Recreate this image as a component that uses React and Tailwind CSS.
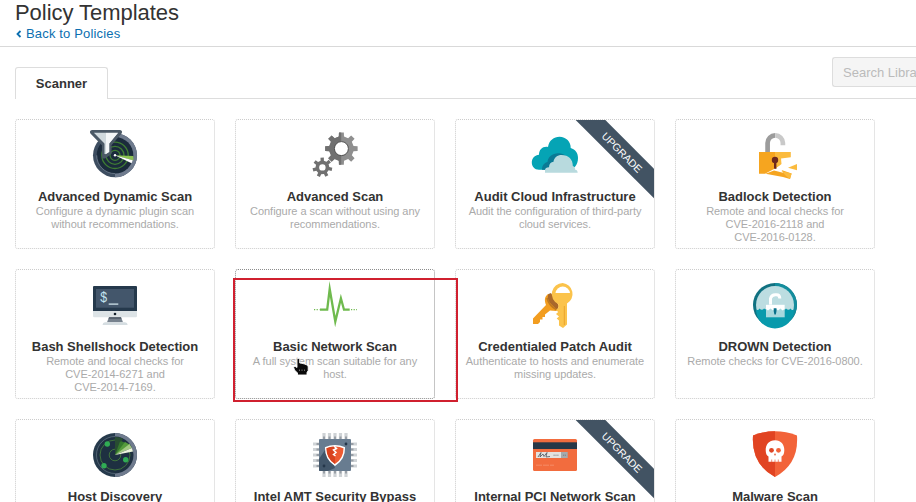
import React from "react";

function Icon({ children }) {
  return (
    <svg viewBox="0 0 50 50" className="h-[50px] w-[50px] shrink-0 overflow-visible">
      {children}
    </svg>
  );
}

function FunnelRadar() {
  return (
    <Icon>
      <circle cx="25" cy="25.3" r="22" fill="#3d4d60" />
      <path d="M25 3.3a22 22 0 0 1 0 44z" fill="#6f7b8e" />
      <circle cx="25" cy="25.3" r="18.3" fill="#1b2b3c" />
      <path d="M25 43.6A18.3 18.3 0 0 1 6.7 25.3" fill="none" stroke="#8a96a6" strokeWidth=".6" />
      <g fill="none" stroke="#3f7d33" strokeWidth="1.3">
        <circle cx="25" cy="25.3" r="13.2" />
        <circle cx="25" cy="25.3" r="9" />
        <circle cx="25" cy="25.3" r="5" />
      </g>
      <path d="M25 25.3L43.3 26v4.5z" fill="#8cc152" />
      <path d="M25 25.3L42.8 30.3l-1.2 3z" fill="#fff" />
      <path d="M2.500 1.500h27q1.500 0 .7 1.200L20 14.500v8.400l-5.500 4h-1V14.500L1.800 2.700Q1 1.500 2.500 1.500z" fill="#dfe5e8" stroke="#4b5966" strokeWidth="3.200" strokeLinejoin="round" />
      <path d="M16 2.800h12L19.300 13.500V22l-3.300 2z" fill="#f4f7f8" />
      <path d="M4 2.800h12V24h-1.500V13.500z" fill="#d0d9dd" />
      <circle cx="25" cy="25.3" r="1.200" fill="#fff" />
    </Icon>
  );
}

function gearPath(cx, cy, outer, root, teeth, turn) {
  const pts = [];
  const step = (Math.PI * 2) / teeth;
  for (let i = 0; i < teeth; i++) {
    const a = i * step + turn;
    [
      [root, -0.27],
      [outer, -0.19],
      [outer, 0.19],
      [root, 0.27],
    ].forEach(([r, f]) => {
      pts.push(`${(cx + r * Math.cos(a + f * step)).toFixed(2)} ${(cy + r * Math.sin(a + f * step)).toFixed(2)}`);
    });
  }
  return `M${pts.join("L")}Z`;
}

function Gears() {
  const big = gearPath(31.4, 18.6, 16.4, 12.4, 8, 0);
  return (
    <Icon>
      <clipPath id="gear-left"><rect x="0" y="0" width="31.2" height="50" /></clipPath>
      <path d={big} fill="#8f8f8f" />
      <path d={big} fill="#707070" clipPath="url(#gear-left)" />
      <circle cx="31.4" cy="18.6" r="7" fill="#fff" stroke="#4f4f4f" strokeWidth="1" />
      <path d={gearPath(12.4, 37.4, 9.9, 6.9, 7, 0.2)} fill="#707070" />
      <circle cx="12.4" cy="37.4" r="3.2" fill="#fff" />
    </Icon>
  );
}

function Cloud() {
  return (
    <Icon>
      <path d="M9 39.7C4.500 39.700 1.800 36.500 1.800 32.500C1.800 28 5 25 9 24.700C9 19.500 13 16 18 17C19 10.500 24 6.800 29.500 6.800C36 6.800 41 12 40.700 18C45.500 19.500 48 23 48 28C48 35 44 39.700 38 39.700Z" fill="#05a4b5" />
      <path d="M12 39.700C12 35 15 32.500 17.500 32C18 26 24 22 31 23.500C35 24.500 38 27 39 31L30 39.700Z" fill="#0a7a95" />
      <path d="M15 42.800V40C15 38.500 16.500 37.500 19 37.300C19 34 21 32 23.500 31.800C24 27.500 27.500 25 31.500 25C38.500 25 43 29.500 42.800 36C44.500 36.500 45.200 38 45.200 39.700C47 40 47.700 41 47.700 42.800Z" fill="#b8dade" />
    </Icon>
  );
}

function BrokenLock() {
  return (
    <Icon>
      <path d="M17.600 22V13A7.600 7.600 0 0 1 25.200 5.400" fill="none" stroke="#9c9c9c" strokeWidth="4.700" />
      <path d="M25.200 5.400A7.600 7.600 0 0 1 32.900 13V15.200" fill="none" stroke="#c9c9c9" strokeWidth="4.700" />
      <path d="M9 22H25V38.500L15 43.700H9Z" fill="#f6a51f" />
      <path d="M25 22H40.800V27.200L31 28.500L34 34L25 38.500Z" fill="#fbbb3e" />
      <path d="M31 28.500L37.500 36L41.500 36.200L33.500 38L30 41L24 40L31.500 34Z" fill="#fff" />
      <path d="M38 37.700L47 34V40.200Z" fill="#fbbb3e" />
      <path d="M15.500 43.700L24 40.500L34 43L31.500 40L41.600 43.500L40 49L33 47Z" fill="#f6a51f" />
      <path d="M31.500 41L41.600 43.500L40 49L36 46Z" fill="#fbbb3e" />
      <circle cx="25" cy="30" r="3.200" fill="#6d281e" />
      <path d="M24 31h2.400v8L24 38.500Z" fill="#6d281e" />
    </Icon>
  );
}

function Terminal() {
  return (
    <Icon>
      <path d="M3 31H47V36Q47 37.300 45.700 37.300H4.300Q3 37.300 3 36Z" fill="#dce3e6" />
      <path d="M4 6H46Q47 6 47 7V31H3V7Q3 6 4 6Z" fill="#25394c" />
      <rect x="6" y="9" width="38" height="18.700" fill="#43566b" />
      <text transform="translate(10 21.700) scale(.82 1)" fontFamily="Liberation Mono, monospace" fontSize="15" fill="#c4e4ef">$</text>
      <rect x="18.700" y="23.500" width="9.600" height="1.200" fill="#d9edf3" />
      <circle cx="25" cy="34" r="1.300" fill="#14202b" />
      <path d="M19 37.300H31L33 42.200H17Z" fill="#77828e" />
      <path d="M19 37.300H31L31.500 38.700H18.500Z" fill="#4c5966" />
      <path d="M15 42.200H35Q37.500 42.400 37.700 44.900H12.500Q12.700 42.400 15 42.200Z" fill="#d5dde1" />
    </Icon>
  );
}

function Pulse() {
  return (
    <Icon>
      <path d="M10 29.700H17.200L19.700 9L25.300 41.500L30.900 18.300L34 29.700H39.700" fill="none" stroke="#6fba4e" strokeWidth="2.300" strokeMiterlimit="20" />
      <path d="M4 29.700h5.500M41 29.700h6" fill="none" stroke="#6fba4e" strokeWidth="1.200" strokeDasharray="1.200 1.400" />
    </Icon>
  );
}

function Keys() {
  return (
    <Icon>
      <path d="M18 14C14 17 14.500 21 16 25L3 38.500V44H8L10 42V39.500H12.500V37H15V34.500L20 30.500L26 31C30 27 27 14 18 14Z" fill="#f29d20" />
      <path d="M18.500 14C17 17 18 21 21 24L27 30L29 26L21 13Z" fill="#a9682b" />
      <path d="M17 18Q19 26 27 30" stroke="#c07a20" strokeWidth="1.600" fill="none" />
      <path d="M32.700 3A11 11 0 0 0 28.200 24V28L26 30L28.200 32L26 34L29 36.500L26.700 38.500L29 40.500V45.500L33 48L37 44.500V23.500A11 11 0 0 0 32.700 3Z" fill="#fbc34b" />
      <path d="M25.500 13A7.300 7.300 0 0 1 40 13Z" fill="#fff" />
      <path d="M34.300 26V45" stroke="#eaa42d" strokeWidth="1" />
    </Icon>
  );
}

function Drown() {
  return (
    <Icon>
      <circle cx="25" cy="25" r="22" fill="#107181" />
      <path d="M25 3A22 22 0 0 1 41 40L25 25Z" fill="#138d9d" />
      <circle cx="25" cy="25" r="19" fill="#bcdde1" />
      <path d="M6 29.500Q8 31 9.500 28.500Q12 31 14 28.500Q16 30 18 29.500H32Q34 31 36 28.500Q38.500 31 40.500 28.500Q42 31 44 29.500A19 19 0 0 1 6 29.500Z" fill="#089aac" />
      <path d="M20.500 25V18.500A5 5 0 0 1 25.500 14.700H26.500Q29.800 14.700 29.800 18.500" fill="none" stroke="#fff" strokeWidth="3" />
      <path d="M16 24.700H34.700V37.300H16Z" fill="#a8d8dd" />
      <path d="M16 24.700H34.700V29L32.500 30.500L30.500 28.500L28 30.500L25.500 28.500L23 30.500L20.500 28.500L18 30.500L16 29Z" fill="#fff" />
      <path d="M23.700 28.200H26.500V31L25.800 34.500H24.400L23.700 31Z" fill="#08708a" />
    </Icon>
  );
}

function Radar() {
  return (
    <Icon>
      <circle cx="25" cy="25" r="22" fill="#263a4c" />
      <path d="M25 3a22 22 0 0 1 0 44z" fill="#6f7b8e" />
      <circle cx="25" cy="25" r="18.500" fill="#1e3041" />
      <path d="M25 43.500A18.500 18.500 0 0 1 25 6.500" fill="none" stroke="#71808f" strokeWidth=".6" />
      <g fill="none" stroke="#40743c" strokeWidth="1">
        <circle cx="25" cy="25" r="15" />
        <circle cx="25" cy="25" r="5.800" />
      </g>
      <path d="M25 25V7A18 18 0 0 1 33 8.500Z" fill="#284d31" />
      <path d="M25 25L30 11.500A15 15 0 0 1 36 13Z" fill="#35782d" />
      <path d="M25 25L35 12L40.500 15Z" fill="#559b3c" />
      <path d="M25 25L39.500 14L42 18Z" fill="#a2ca83" />
      <path d="M25 25L42 18L43 21.500Z" fill="#eef5dd" />
      <circle cx="17.300" cy="14" r="2.700" fill="#30ac54" />
      <circle cx="35.700" cy="29.700" r="2.700" fill="#30ac54" />
      <circle cx="14" cy="35.700" r="2.700" fill="#30ac54" />
    </Icon>
  );
}

const PINS = [14, 19.5, 25, 30.5, 36];

function Chip() {
  return (
    <Icon>
      {PINS.map((p) => (
        <g key={p}>
          <path d={`M${p} 3V47M3 ${p}H47`} stroke="#cfd3d6" strokeWidth="3.200" />
          <path d={`M${p} 6.500V43.500M6.500 ${p}H43.500`} stroke="#999fa6" strokeWidth="2" />
        </g>
      ))}
      <rect x="9" y="9" width="32" height="32" rx="1" fill="#687c90" />
      <path d="M9 29L17 17L25 38L18 41H10Q9 41 9 40Z" fill="#42566a" />
      <path d="M25 15.800Q30 15.800 34.300 17.700Q34.500 29 25 35Q15.500 29 15.700 17.700Q20 15.800 25 15.800Z" fill="#ee5b32" stroke="#fff" strokeWidth="1.500" />
      <path d="M25 16.500V34Q16.500 28.500 16.500 18.300Q20 16.500 25 16.500Z" fill="#d8431f" />
      <path d="M24 16L26.500 18.500L23.500 20L26 22.500L23.500 24.500L25.500 26" fill="none" stroke="#fff" strokeWidth="1.500" />
      <circle cx="36" cy="14" r="1.400" fill="#24364a" />
      <circle cx="14" cy="36" r="1.400" fill="#24364a" />
    </Icon>
  );
}

function CreditCard() {
  return (
    <Icon>
      <rect x="3" y="9" width="44" height="32" rx="1.500" fill="#f26c3e" />
      <rect x="3" y="12.300" width="44" height="6.700" fill="#283746" />
      <rect x="6" y="22" width="25" height="6" fill="#e2e2df" />
      <rect x="31" y="22" width="6.700" height="6" fill="#a6aaad" />
      <path d="M8 27L11 22.500L10 27L13 24L14 26.500L17 22.500L16 27L20 26.500" fill="none" stroke="#4e565c" strokeWidth=".8" />
      <path d="M23.500 25.200h5M33 25.200h3" stroke="#767b7e" strokeWidth=".9" strokeDasharray="1.200 .7" />
      <path d="M6 35.200h18" stroke="#f8a183" strokeWidth=".6" strokeDasharray="6 1" />
    </Icon>
  );
}

function SkullShield() {
  return (
    <Icon>
      <path d="M25 1.300Q36 1.300 47 5.500Q49 34 25 47Q1 34 3 5.500Q14 1.300 25 1.300Z" fill="#f26339" />
      <path d="M25 1.300V47Q1 34 3 5.500Q14 1.300 25 1.300Z" fill="#e14422" />
      <path d="M25 10.200C31 10.200 34.300 14.500 34.300 20C34.300 23.500 33.500 25.500 31.500 26.500V31.800H18.500V26.500C16.500 25.500 15.700 23.500 15.700 20C15.700 14.500 19 10.200 25 10.200Z" fill="#fff" />
      <circle cx="21.500" cy="20.300" r="2.400" fill="#df4524" />
      <circle cx="28.500" cy="20.300" r="2.400" fill="#f26339" />
      <path d="M25 23l1 2.300h-2z" fill="#df4524" />
      <path d="M21.700 29.500v2.500M25 29.500v2.500M28.300 29.500v2.500" stroke="#e8623f" strokeWidth=".7" />
    </Icon>
  );
}

const TEMPLATES = [
  { title: "Advanced Dynamic Scan", lines: ["Configure a dynamic plugin scan", "without recommendations."], icon: FunnelRadar },
  { title: "Advanced Scan", lines: ["Configure a scan without using any", "recommendations."], icon: Gears },
  { title: "Audit Cloud Infrastructure", lines: ["Audit the configuration of third-party", "cloud services."], icon: Cloud, upgrade: true },
  { title: "Badlock Detection", lines: ["Remote and local checks for", "CVE-2016-2118 and", "CVE-2016-0128."], icon: BrokenLock },
  { title: "Bash Shellshock Detection", lines: ["Remote and local checks for", "CVE-2014-6271 and", "CVE-2014-7169."], icon: Terminal },
  { title: "Basic Network Scan", lines: ["A full system scan suitable for any", "host."], icon: Pulse, hovered: true },
  { title: "Credentialed Patch Audit", lines: ["Authenticate to hosts and enumerate", "missing updates."], icon: Keys },
  { title: "DROWN Detection", lines: ["Remote checks for CVE-2016-0800."], icon: Drown },
  { title: "Host Discovery", lines: [], icon: Radar },
  { title: "Intel AMT Security Bypass", lines: [], icon: Chip },
  { title: "Internal PCI Network Scan", lines: [], icon: CreditCard, upgrade: true },
  { title: "Malware Scan", lines: [], icon: SkullShield },
];

function UpgradeRibbon() {
  return (
    <div className="absolute inset-0 overflow-hidden">
      <div className="absolute top-[19px] right-[-44px] flex h-[21px] w-[156px] rotate-45 items-center justify-center bg-[#425363] pt-[2px] pl-[7px] text-[10.500px] text-white">
        UPGRADE
      </div>
    </div>
  );
}

function TemplateCard({ title, lines, icon: Glyph, upgrade, hovered }) {
  return (
    <div
      className={`relative flex h-[130px] flex-col items-center rounded-[3px] border border-dotted pt-[10px] ${
        hovered ? "border-[#8c8c8c]" : "border-[#cccccc]"
      }`}
    >
      <Glyph />
      <h2 className="mt-2 text-[13px] leading-[17px] font-bold tracking-[-0.02px] whitespace-nowrap text-[#333333]">{title}</h2>
      <p className="text-center text-[11px] leading-[13px] tracking-[-0.04px] whitespace-nowrap text-[#aaaaaa]">
        {lines.map((line) => (
          <span key={line} className="block">{line}</span>
        ))}
      </p>
      {upgrade && <UpgradeRibbon />}
    </div>
  );
}

function HandCursor() {
  return (
    <svg viewBox="0 0 16 18" className="absolute top-[358px] left-[293px] h-[18px] w-4">
      <path d="M4 1.500Q4 .5 5.300 .5Q6.700 .5 6.700 1.500V5L9 5.300L11.500 6L14 7Q15.200 7.500 15.200 9V12.500L14 14.500V17H4.500V15L1.500 12L.7 9.500Q.7 8.300 2 8.300L4 9.500Z" fill="#0a0a0a" stroke="#fff" strokeWidth=".9" />
      <path d="M6.500 11.500V13M9 11.500V13M11.500 11.500V13" stroke="#999" strokeWidth=".7" />
    </svg>
  );
}

export default function App() {
  return (
    <div className="relative h-[502px] w-[916px] overflow-hidden bg-white font-['Liberation_Sans',Arial,sans-serif]">
      <header className="h-[47px] border-b border-[#d9d9d9] px-[15px]">
        <h1 className="text-[22px] leading-[26px] tracking-[-0.05px] text-[#333333]">Policy Templates</h1>
        <a className="flex items-center text-[13px] leading-4 tracking-[0.16px] text-[#0c6fb0]">
          <svg viewBox="0 0 8 8" className="mr-[3px] h-2 w-2">
            <path d="M5.500 1L2.500 4L5.500 7" fill="none" stroke="currentColor" strokeWidth="1.800" />
          </svg>
          Back to Policies
        </a>
      </header>

      <div className="flex h-[52px] items-end pl-[15px]">
        <div className="flex h-8 w-[93px] items-center justify-center rounded-t-[3px] border border-b-0 border-[#dddddd] text-[13px] font-bold text-[#333333]">
          Scanner
        </div>
        <div className="flex h-full flex-1 justify-end border-b border-[#dddddd] pt-[10px]">
          <div className="flex h-[30px] w-[84px] items-center overflow-hidden rounded-l-[3px] border border-r-0 border-[#dddddd] bg-[#f5f5f5] pt-px pl-[10px] text-[13px] whitespace-nowrap text-[#bbbbbb]">
            Search Library
          </div>
        </div>
      </div>

      <main className="grid grid-cols-[repeat(4,200px)] gap-5 px-[15px] pt-5">
        {TEMPLATES.map((t) => (
          <TemplateCard key={t.title} {...t} />
        ))}
      </main>

      <div className="absolute top-[278px] left-[233px] h-[124px] w-[225px] border-2 border-[#d0202f]" />
      <HandCursor />
    </div>
  );
}
